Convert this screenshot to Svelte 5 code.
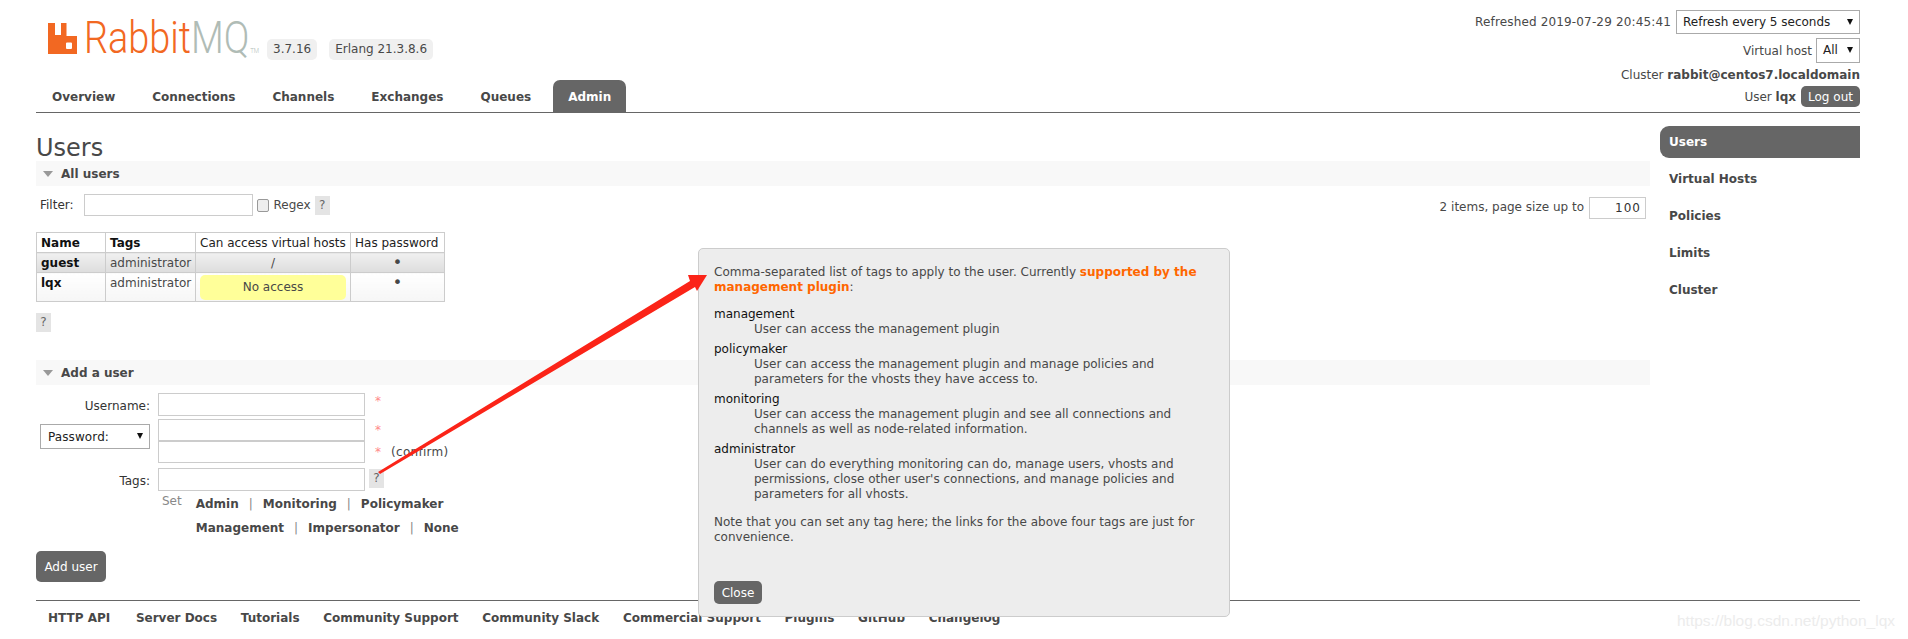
<script>
	const tabs = ["Overview", "Connections", "Channels", "Exchanges", "Queues", "Admin"];
	const side = ["Users", "Virtual Hosts", "Policies", "Limits", "Cluster"];
	const foot = ["HTTP API", "Server Docs", "Tutorials", "Community Support", "Community Slack", "Commercial Support", "Plugins", "GitHub", "Changelog"];
	const users = [
		{ name: "guest", vhost: "/" },
		{ name: "lqx", vhost: null }
	];
	const tagHelp = [
		{ tag: "management", lines: ["User can access the management plugin"] },
		{ tag: "policymaker", lines: ["User can access the management plugin and manage policies and", "parameters for the vhosts they have access to."] },
		{ tag: "monitoring", lines: ["User can access the management plugin and see all connections and", "channels as well as node-related information."] },
		{ tag: "administrator", lines: ["User can do everything monitoring can do, manage users, vhosts and", "permissions, close other user's connections, and manage policies and", "parameters for all vhosts."] }
	];
</script>

<div class="page">
	<header>
		<div class="brand">
			<div class="logo-row">
				<svg class="mark" width="30" height="32" viewBox="0 0 30 32">
					<path fill="#f26822" fill-rule="evenodd" d="M0 0H7V12H13V0H18.500V13H29V31H0ZM19 19.500Q18 19.500 18 20.500V25Q18 26 19 26H23Q24 26 24 25V20.500Q24 19.500 23 19.500Z" />
				</svg>
				<span class="wordmark"><span class="rabbit">Rabbit</span><span class="mq">MQ</span><span class="tm">TM</span></span>
				<span class="badge first">3.7.16</span>
				<span class="badge">Erlang 21.3.8.6</span>
			</div>
			<nav>
				{#each tabs as tab}
					<a href="#top" class:active={tab == "Admin"}>{tab}</a>
				{/each}
			</nav>
		</div>
		<div class="login">
			<div class="login-row one">
				<span>Refreshed 2019-07-29 20:45:41</span>
				<span class="select wide">Refresh every 5 seconds</span>
			</div>
			<div class="login-row two">
				<span>Virtual host</span>
				<span class="select small">All</span>
			</div>
			<div class="login-row three">Cluster&nbsp;<b>rabbit@centos7.localdomain</b></div>
			<div class="login-row four">
				<span>User <b>lqx</b></span>
				<button class="btn logout">Log out</button>
			</div>
		</div>
	</header>

	<div class="body">
		<main>
			<h1>Users</h1>
			<section>
				<h2><i class="tri"></i>All users</h2>
				<div class="filter">
					<label for="filter">Filter:</label>
					<input id="filter" class="filter-input" />
					<input type="checkbox" class="check" />
					<span class="regex">Regex</span>
					<span class="help">?</span>
					<span class="pager">2 items, page size up to</span>
					<input class="page-size" value="100" />
				</div>
				<table>
					<thead>
						<tr>
							<th class="c1 strong">Name</th>
							<th class="c2 strong">Tags</th>
							<th class="c3">Can access virtual hosts</th>
							<th class="c4">Has password</th>
						</tr>
					</thead>
					<tbody>
						{#each users as user}
							<tr class={user.vhost ? "alt1" : "alt2"}>
								<td class="strong">{user.name}</td>
								<td>administrator</td>
								<td class="center">
									{#if user.vhost}
										{user.vhost}
									{:else}
										<div class="warning">No access</div>
									{/if}
								</td>
								<td class="center"><span class="dot">•</span></td>
							</tr>
						{/each}
					</tbody>
				</table>
				<span class="help table-help">?</span>
			</section>

			<section class="add">
				<h2><i class="tri"></i>Add a user</h2>
				<div class="form">
					<div class="form-row user-row">
						<label class="form-label" for="username">Username:</label>
						<input id="username" class="text" />
						<span class="req">*</span>
					</div>
					<div class="form-row pass-row">
						<div class="form-label">
							<span class="select pass">Password:</span>
						</div>
						<div class="pass-inputs">
							<input class="text" type="password" />
							<input class="text" type="password" />
						</div>
						<div class="pass-notes">
							<span class="req">*</span>
							<span class="req">*<span class="confirm">(confirm)</span></span>
						</div>
					</div>
					<div class="form-row">
						<label class="form-label" for="tags">Tags:</label>
						<input id="tags" class="text" />
						<span class="help tag-help">?</span>
					</div>
					<div class="set-row">
						<span class="set">Set</span>
						<div class="tag-links">
							<div><a href="#top">Admin</a><i>|</i><a href="#top">Monitoring</a><i>|</i><a href="#top">Policymaker</a></div>
							<div><a href="#top">Management</a><i>|</i><a href="#top">Impersonator</a><i>|</i><a href="#top">None</a></div>
						</div>
					</div>
				</div>
				<button class="btn add-btn">Add user</button>
			</section>
		</main>

		<aside>
			{#each side as item}
				<a href="#top" class:active={item == "Users"}>{item}</a>
			{/each}
		</aside>
	</div>

	<footer>
		{#each foot as link}
			<a href="#top">{link}</a>
		{/each}
	</footer>

	<div class="dialog">
		<p>Comma-separated list of tags to apply to the user. Currently <a href="#top">supported by the<br />management plugin</a>:</p>
		<dl>
			{#each tagHelp as help}
				<dt>{help.tag}</dt>
				<dd>
					{#each help.lines as line}
						<div>{line}</div>
					{/each}
				</dd>
			{/each}
		</dl>
		<p class="note">Note that you can set any tag here; the links for the above four tags are just for<br />convenience.</p>
		<button class="btn close">Close</button>
	</div>

	<!-- red annotation arrow drawn over the page -->
	<svg class="arrow" width="1908" height="639" viewBox="0 0 1908 639">
		<polygon fill="#fb2418" points="378,472 690,281 688,275 707,275 697,291 695,287 380,474" />
	</svg>

	<div class="watermark">https://blog.csdn.net/python_lqx</div>
</div>

<style>
	:global(body) {
		background: #fff;
	}

	.page {
		width: 1908px;
		height: 639px;
		overflow: hidden;
		position: relative;
		box-sizing: border-box;
		padding: 0 48px 0 36px;
		font-family: "DejaVu Sans", Verdana, sans-serif;
		font-size: 12px;
		color: #484848;
	}

	a {
		color: inherit;
		text-decoration: none;
	}

	header {
		height: 112px;
		display: flex;
		justify-content: space-between;
		border-bottom: 1px solid #666;
	}

	.logo-row {
		display: flex;
		height: 80px;
		padding: 23px 0 0 12px;
		box-sizing: border-box;
	}

	.mark {
		display: block;
	}

	.wordmark {
		font-family: Roboto, sans-serif;
		font-weight: 300;
		font-size: 44px;
		line-height: 31px;
		margin-left: 6px;
		width: 183px;
		white-space: nowrap;
		transform: scaleX(0.86);
		transform-origin: left top;
	}

	.rabbit {
		color: #f26822;
	}

	.mq {
		color: #b0bcb6;
	}

	.tm {
		font-size: 7px;
		color: #b0bcb6;
		margin-left: 1px;
	}

	.badge {
		align-self: flex-start;
		margin: 16px 0 0 12px;
		padding: 0 6px;
		height: 21px;
		line-height: 21px;
		background: #f0f0f0;
		border-radius: 5px;
		white-space: nowrap;
	}

	.badge.first {
		margin-left: 0;
	}

	nav {
		display: flex;
		padding-left: 1px;
		height: 32px;
	}

	nav a {
		padding: 2px 15px 0;
		margin-right: 7px;
		font-weight: bold;
		line-height: 30px;
		border-radius: 7px 7px 0 0;
	}

	nav a.active {
		background: #666;
		color: #fff;
	}

	.login {
		display: flex;
		flex-direction: column;
		align-items: flex-end;
		padding-top: 10px;
	}

	.login-row {
		display: flex;
		align-items: center;
		white-space: nowrap;
	}

	.one span:first-child {
		margin-right: 5px;
		letter-spacing: 0.15px;
	}

	.two {
		margin-top: 4px;
	}

	.two span:first-child {
		margin-right: 4px;
	}

	.three {
		margin-top: 2px;
		height: 19px;
	}

	.four {
		margin-top: 2px;
	}

	.four span {
		margin-right: 5px;
	}

	.select {
		display: block;
		position: relative;
		box-sizing: border-box;
		background: #fff;
		border: 1px solid #aaa;
		height: 24px;
		line-height: 22px;
		padding-left: 6px;
		color: #222;
		text-align: left;
	}

	.select::after {
		content: "";
		position: absolute;
		right: 6px;
		top: 8px;
		border-left: 3px solid transparent;
		border-right: 3px solid transparent;
		border-top: 6px solid #111;
	}

	.select.wide {
		width: 184px;
	}

	.select.small {
		width: 44px;
		height: 25px;
	}

	.select.pass {
		width: 110px;
		height: 25px;
		line-height: 24px;
		padding-left: 7px;
		letter-spacing: 0.1px;
	}

	.btn {
		background: #666;
		color: #fff;
		border: 0;
		border-radius: 5px;
		font-family: inherit;
		font-size: 12px;
		padding: 0;
	}

	.logout {
		width: 59px;
		height: 21px;
	}

	.body {
		display: flex;
		justify-content: space-between;
	}

	main {
		width: 1614px;
	}

	h1 {
		margin: 0;
		height: 48px;
		padding-top: 18px;
		box-sizing: border-box;
		font-size: 24px;
		line-height: 34px;
		font-weight: normal;
	}

	h2 {
		margin: 0;
		height: 25px;
		background: #f8f8f8;
		display: flex;
		align-items: center;
		font-size: 12px;
		font-weight: bold;
	}

	.tri {
		width: 0;
		height: 0;
		margin: 0 8px 0 7px;
		border-left: 5px solid transparent;
		border-right: 5px solid transparent;
		border-top: 6px solid #999;
	}

	.filter {
		display: flex;
		align-items: center;
		margin-top: 7px;
		height: 24px;
		padding-left: 4px;
	}

	label {
		color: #333;
	}

	input {
		box-sizing: border-box;
		border: 1px solid #ccc;
		background: #fff;
		margin: 0;
		padding: 0 4px;
		font-family: inherit;
		font-size: 12px;
	}

	.filter-input {
		width: 169px;
		height: 22px;
		margin-left: 10px;
	}

	.check {
		appearance: none;
		width: 12px;
		height: 13px;
		margin-left: 4px;
		background: #eee;
		border: 1px solid #999;
		border-radius: 2px;
	}

	.regex {
		margin-left: 5px;
	}

	.help {
		display: inline-block;
		width: 15px;
		height: 19px;
		line-height: 19px;
		text-align: center;
		background: #e4e4e4;
		color: #666;
	}

	.filter .help {
		margin-left: 4px;
	}

	.pager {
		margin-left: auto;
		margin-right: 5px;
		margin-top: 3px;
	}

	.page-size {
		width: 57px;
		height: 22px;
		margin: 5px 4px 0 0;
		text-align: right;
		color: #333;
		letter-spacing: 1px;
	}

	table {
		margin-top: 15px;
		border-collapse: collapse;
		table-layout: fixed;
		width: 408px;
	}

	th, td {
		border: 1px solid #ccc;
		padding: 1px 4px 0;
		height: 18px;
		font-weight: normal;
		text-align: left;
		vertical-align: top;
		line-height: 18px;
		white-space: nowrap;
	}

	th {
		color: #222;
	}

	.strong {
		font-weight: bold;
		color: #111;
	}

	.c1 { width: 60px; }
	.c2 { width: 81px; }
	.c3 { width: 146px; }
	.c4 { width: 85px; }

	.center {
		text-align: center;
	}

	.dot {
		display: inline-block;
		height: 18px;
		font-size: 16px;
		line-height: 18px;
		vertical-align: top;
	}

	.alt1 td {
		background: linear-gradient(#f0f0f0, #ddd);
	}

	.alt2 td {
		background: linear-gradient(#fff, #f6f6f6);
	}

	.warning {
		background: #ff9;
		border-radius: 5px;
		height: 25px;
		line-height: 25px;
		margin: 1px 0;
	}

	.table-help {
		display: block;
		margin-top: 11px;
	}

	.add {
		margin-top: 28px;
	}

	.form {
		padding-top: 8px;
		width: 500px;
	}

	.form-row {
		display: flex;
		align-items: flex-start;
		height: 23px;
	}

	.form-label {
		width: 114px;
		height: 23px;
		margin-right: 8px;
		text-align: right;
		padding-left: 4px;
		box-sizing: border-box;
		line-height: 27px;
		flex: none;
	}

	.text {
		width: 207px;
		height: 23px;
	}

	.req {
		color: #f88;
		margin-left: 10px;
		line-height: 16px;
	}

	.pass-row {
		margin: 3px 0 4px;
		height: 45px;
	}

	.pass-row .form-label {
		padding-top: 5px;
		line-height: 23px;
	}

	.pass-inputs {
		display: flex;
		flex-direction: column;
	}

	.pass-inputs .text {
		height: 22px;
	}

	.pass-notes {
		display: flex;
		flex-direction: column;
		gap: 6px;
		padding-top: 3px;
	}

	.confirm {
		color: #484848;
		margin-left: 10px;
		letter-spacing: 0.3px;
	}

	.tag-help {
		margin: 1px 0 0 4px;
	}

	.set-row {
		display: flex;
		margin: 0 0 0 126px;
	}

	.set {
		color: #888;
		margin: 3px 14px 0 0;
	}

	.tag-links {
		font-weight: bold;
		padding-top: 1px;
	}

	.tag-links div {
		height: 24px;
		line-height: 24px;
		white-space: nowrap;
	}

	.tag-links i {
		font-style: normal;
		font-weight: normal;
		color: #888;
		margin: 0 10px;
	}

	.add-btn {
		display: block;
		width: 70px;
		height: 31px;
		margin-top: 11px;
	}

	aside {
		width: 200px;
		padding-top: 13px;
		display: flex;
		flex-direction: column;
	}

	aside a {
		height: 32px;
		line-height: 32px;
		margin-bottom: 5px;
		padding-left: 9px;
		font-weight: bold;
	}

	aside a.active {
		background: #666;
		color: #fff;
		border-radius: 9px 0 0 9px;
	}

	footer {
		position: absolute;
		top: 600px;
		left: 36px;
		right: 48px;
		border-top: 1px solid #666;
		display: flex;
		gap: 23.7px;
		padding: 10px 0 0 12px;
		font-weight: bold;
	}

	footer a:first-child {
		margin-right: 2px;
	}

	.dialog {
		position: absolute;
		left: 698px;
		top: 248px;
		width: 532px;
		height: 369px;
		box-sizing: border-box;
		padding: 16px 15px;
		background: #ededed;
		border: 1px solid #ccc;
		border-radius: 5px;
		line-height: 15px;
	}

	.dialog p {
		margin: 0;
	}

	.dialog p a {
		color: #f60;
		font-weight: bold;
	}

	dl {
		margin: 12px 0 0;
	}

	dt {
		color: #111;
		margin-top: 5px;
	}

	dd {
		margin: 0 0 0 40px;
	}

	.note {
		margin-top: 13px !important;
	}

	.close {
		position: absolute;
		left: 15px;
		top: 332px;
		width: 48px;
		height: 23px;
	}

	.arrow {
		position: absolute;
		left: 0;
		top: 0;
		pointer-events: none;
	}

	.watermark {
		position: absolute;
		left: 1677px;
		top: 611px;
		font-family: "Liberation Sans", Arial, sans-serif;
		font-size: 15.5px;
		line-height: 20px;
		color: #ececec;
		white-space: nowrap;
	}
</style>
